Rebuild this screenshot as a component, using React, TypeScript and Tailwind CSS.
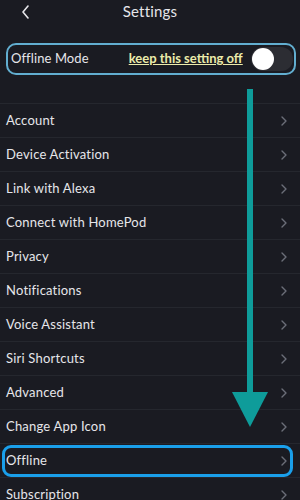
const ITEMS = [
  "Account",
  "Device Activation",
  "Link with Alexa",
  "Connect with HomePod",
  "Privacy",
  "Notifications",
  "Voice Assistant",
  "Siri Shortcuts",
  "Advanced",
  "Change App Icon",
  "Offline",
  "Subscription",
];

function Chevron() {
  return (
    <svg width="6" height="10" viewBox="0 0 6 10" className="shrink-0">
      <path d="M1 1l4 4-4 4" fill="none" stroke="#6b6e78" strokeWidth="1.4" strokeLinecap="round" strokeLinejoin="round" />
    </svg>
  );
}

export default function App() {
  return (
    <div className="relative w-[300px] h-[500px] overflow-hidden bg-[#1a1b22] text-[#e6e6ea] font-['Lato','Noto_Sans',sans-serif]">
      {/* Header */}
      <div className="relative h-[23px] flex items-center justify-center">
        <svg width="9" height="14" viewBox="0 0 9 14" className="absolute left-[21px] top-[5px]">
          <path d="M7 1L2 7l5 6" fill="none" stroke="#e6e6ea" strokeWidth="1.6" strokeLinecap="round" strokeLinejoin="round" />
        </svg>
        <span className="text-[15px] tracking-[0.2px]">Settings</span>
      </div>

      {/* Offline mode toggle */}
      <div className="mt-[20px] ml-[6px] mr-[4px] h-[32px] rounded-[10px] border-2 border-[#62aed0] flex items-center pl-[3px] pr-[1px]">
        <span className="text-[13px] tracking-[0.1px]">Offline Mode</span>
        <span className="ml-[40px] text-[13px] font-bold underline text-[#ecebab] decoration-[#ecebab]">keep this setting off</span>
        <div className="ml-auto w-[42px] h-[24px] rounded-full bg-[#2c2d33] flex items-center pl-[1px]">
          <div className="w-[22px] h-[22px] rounded-full bg-white" />
        </div>
      </div>

      {/* List */}
      <div className="mt-[28px] border-t border-[#25272e]">
        {ITEMS.map((item) => (
          <div key={item} className="relative h-[34px] flex items-center justify-between pl-[6px] pr-[13px] border-b border-[#25272e]">
            <span className="text-[13px] tracking-[0.2px]">{item}</span>
            <Chevron />
            {item === "Offline" && (
              <div className="absolute left-[2px] right-[7px] top-[1px] bottom-[0px] rounded-[9px] border-[3px] border-[#1a9fea]" />
            )}
          </div>
        ))}
      </div>

      {/* Teal arrow overlay */}
      <div className="absolute left-[247px] top-[89px] w-[6px] h-[305px] bg-[#0e9c9a]" />
      <svg width="36" height="36" viewBox="0 0 36 36" className="absolute left-[232px] top-[392px]">
        <polygon points="0,0 36,0 18,35" fill="#0e9c9a" />
      </svg>
    </div>
  );
}
